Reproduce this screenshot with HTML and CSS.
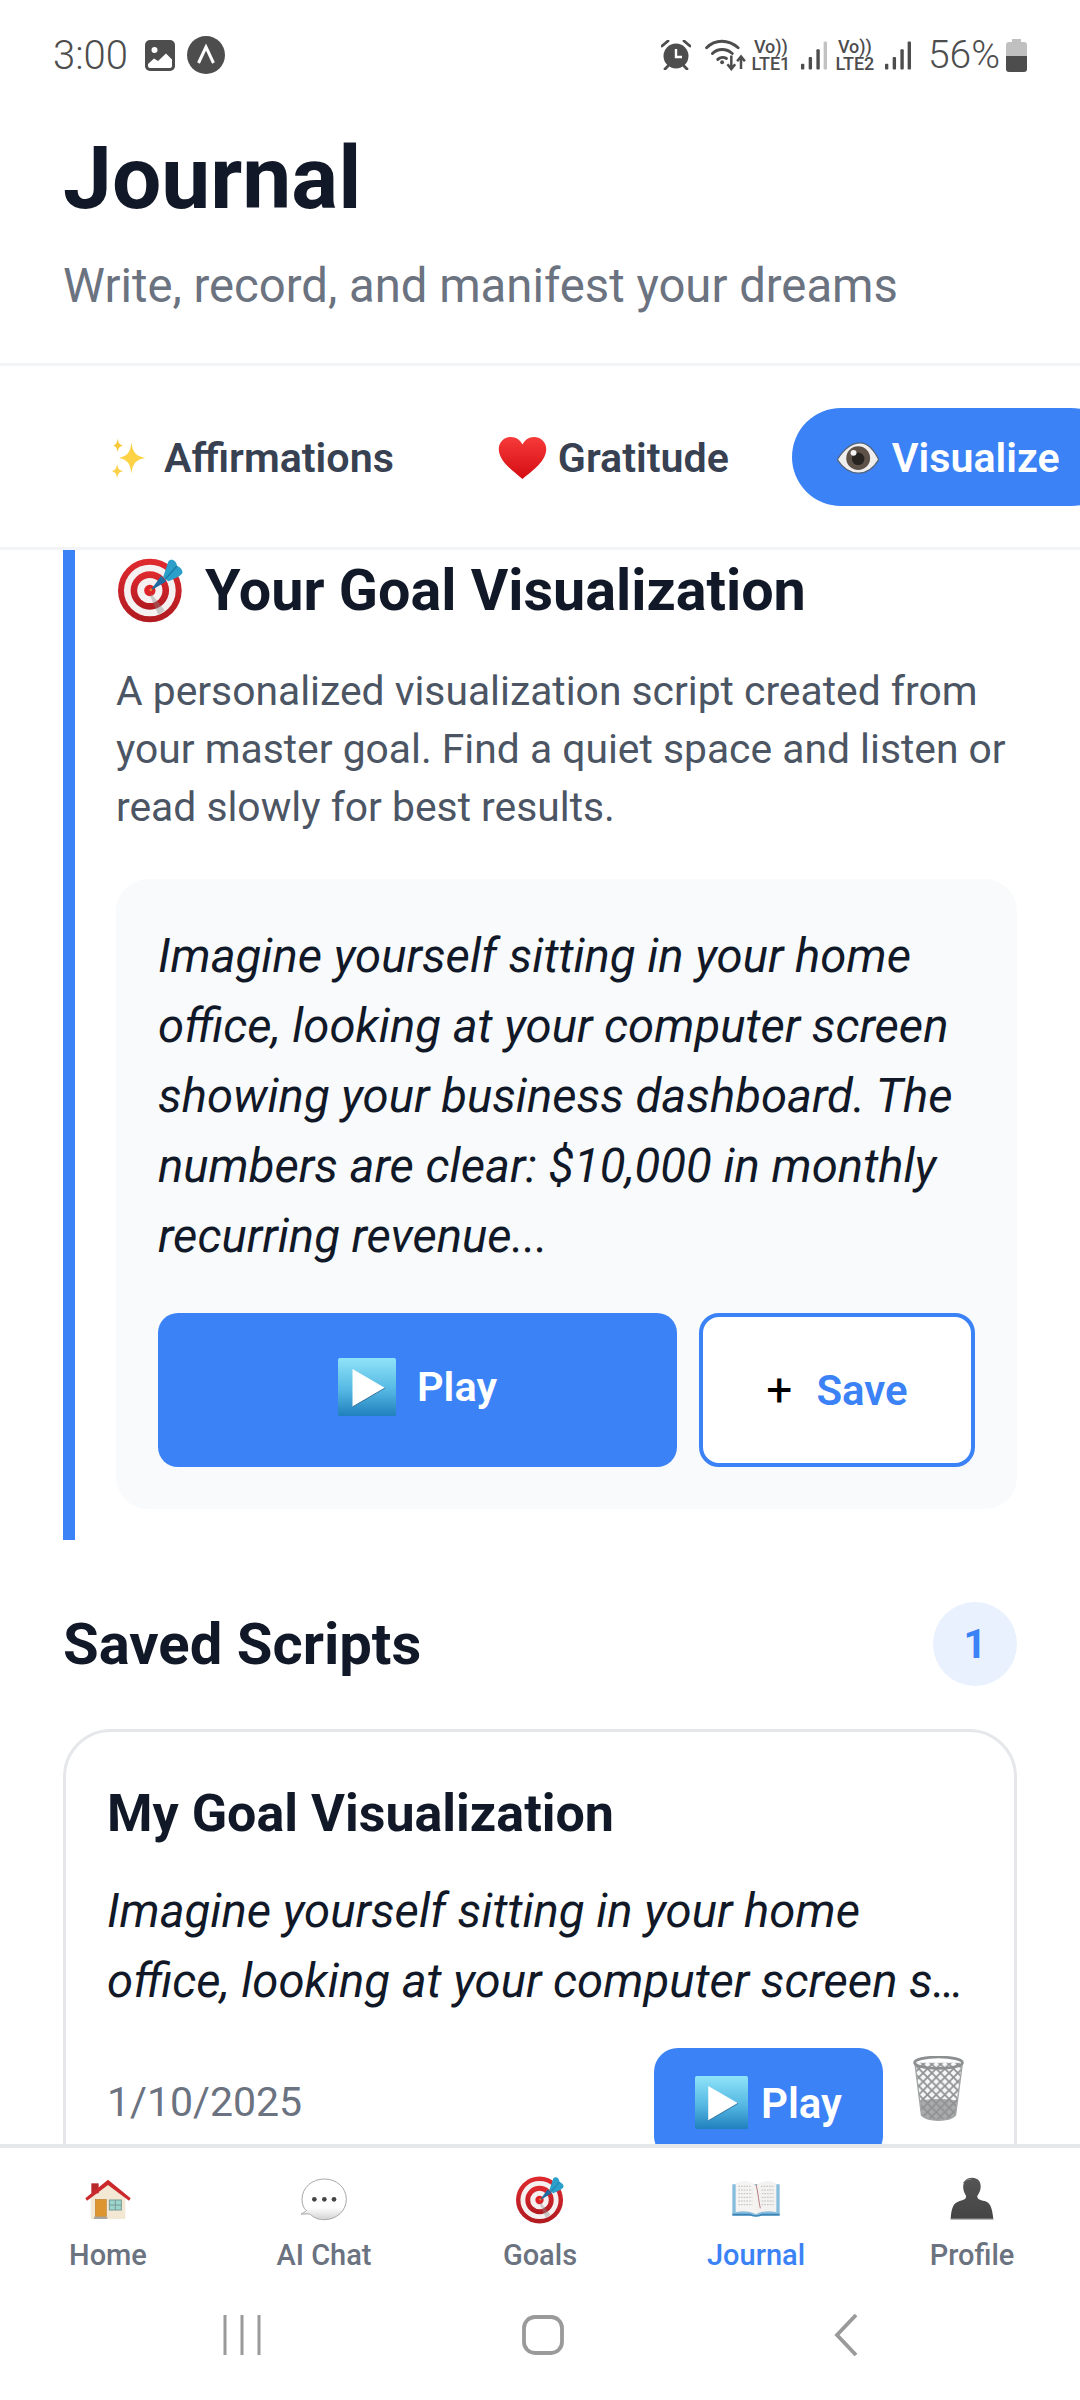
FILE: index.html
```html
<!DOCTYPE html>
<html lang="en">
<head>
<meta charset="utf-8">
<title>Journal</title>
<link rel="stylesheet" href="styles.css">
</head>
<body>
<svg class="defs" width="0" height="0" aria-hidden="true">
  <defs>
    <linearGradient id="playGrad" x1="0" y1="0" x2="0" y2="1">
      <stop offset="0" stop-color="#8fe3f8"/><stop offset=".55" stop-color="#55b8e3"/><stop offset="1" stop-color="#1f80bd"/>
    </linearGradient>
    <linearGradient id="heartGrad" x1="0" y1="0" x2="0" y2="1">
      <stop offset="0" stop-color="#f63a3a"/><stop offset="1" stop-color="#d40d12"/>
    </linearGradient>
    <linearGradient id="bustGrad" x1="0" y1="0" x2="0" y2="1">
      <stop offset="0" stop-color="#555"/><stop offset="1" stop-color="#444"/>
    </linearGradient>
    <linearGradient id="ringGrad" x1="0" y1="0" x2="0" y2="1">
      <stop offset="0" stop-color="#e02a2f"/><stop offset="1" stop-color="#b01a20"/>
    </linearGradient>
    <linearGradient id="chatGrad" x1="0" y1="0" x2="0" y2="1">
      <stop offset="0" stop-color="#fff"/><stop offset=".7" stop-color="#fff"/><stop offset="1" stop-color="#d2d2d2"/>
    </linearGradient>
    <pattern id="mesh" width="26" height="26" patternUnits="userSpaceOnUse">
      <path d="M0 0 26 26M26 0 0 26" stroke="#8f9293" stroke-width="5.500"/>
    </pattern>
    <symbol id="e-target" viewBox="54 20 196 196">
      <circle cx="150" cy="118" r="96" fill="url(#ringGrad)"/>
      <circle cx="150" cy="118" r="78" fill="#f6f1f1"/>
      <circle cx="150" cy="118" r="58" fill="url(#ringGrad)"/>
      <circle cx="150" cy="118" r="38" fill="#f6f1f1"/>
      <circle cx="150" cy="118" r="17" fill="#dd2228"/>
      <path d="M155 128 195 178 176 192 150 132Z" fill="#8a8a8a" opacity=".4"/>
      <path d="M150 120 184 74 200 90Z" fill="#1f6a9e"/>
      <path d="M190 78 206 30C216 20 230 28 232 44 244 48 250 58 248 66 238 78 220 84 206 90Z" fill="#2b9fca"/>
      <path d="M196 84 232 44" stroke="#1a7ba6" stroke-width="4"/>
      <circle cx="153" cy="116" r="4" fill="#e8862a"/>
    </symbol>
    <symbol id="e-spark" viewBox="0 0 64 64">
      <path d="M36 6C38 22 42 28 58 31 42 34 38 40 36 56 34 40 30 34 16 31 30 28 34 22 36 6Z" fill="#fdd247"/>
      <path d="M14 0C15 7 17 10 22 11 17 13 15 15 14 22 13 15 11 13 7 11 11 10 13 7 14 0Z" fill="#f9c93c"/>
      <path d="M13 40C14 48 16 51 23 52 16 54 14 56 13 64 12 56 10 54 4 52 10 51 12 48 13 40Z" fill="#fbd04a"/>
    </symbol>
    <symbol id="e-heart" viewBox="0 0 64 56" preserveAspectRatio="none">
      <path d="M32 56C18 44 1 32 1 16 1 6 9 0 17 0 24 0 29 4 32 10 35 4 40 0 47 0 55 0 63 6 63 16 63 32 46 44 32 56Z" fill="url(#heartGrad)"/>
    </symbol>
    <symbol id="e-eye" viewBox="40 40 127 95">
      <path d="M41 92C65 55 90 42 110 42 130 42 150 60 166 92 150 120 130 133 105 133 85 133 60 122 41 92Z" fill="#efeeed" stroke="#54647c" stroke-width="4"/>
      <circle cx="104" cy="88" r="36" fill="#5e5148"/>
      <circle cx="104" cy="90" r="19" fill="#262321"/>
      <circle cx="90" cy="72" r="9" fill="#f2f2f2"/>
    </symbol>
    <symbol id="e-play" viewBox="0 0 64 64">
      <rect width="64" height="64" rx="2" fill="url(#playGrad)"/>
      <path d="M16 12 52 33 16 54Z" fill="#fff"/>
      <path d="M52 33 16 54" stroke="#27668f" stroke-width="1"/>
    </symbol>
    <symbol id="e-trash" viewBox="880 105 152 195">
      <path d="M885 125 905 283C925 303 987 303 1007 283L1028 125Z" fill="#f7f7f7"/>
      <path d="M885 125 905 283C925 303 987 303 1007 283L1028 125Z" fill="url(#mesh)"/>
      <path d="M901 240C930 232 985 232 1012 240L1007 283C987 303 925 303 905 283Z" fill="#8f9293" opacity=".75"/>
      <path d="M885 125 905 283C925 303 987 303 1007 283L1028 125" fill="none" stroke="#a3a6a7" stroke-width="4"/>
      <ellipse cx="956" cy="125" rx="72" ry="17" fill="none" stroke="#8c8f90" stroke-width="8"/>
    </symbol>
    <symbol id="e-house" viewBox="38 33 144 144">
      <path d="M58 98 110 56 162 98V162H58Z" fill="#f2e8d3"/>
      <rect x="60" y="55" width="22" height="30" fill="#b9292c"/>
      <path d="M42 100 110 44 178 100 173 107 110 60 47 107Z" fill="#cb282c"/>
      <rect x="72" y="103" width="33" height="52" fill="#dd9530" stroke="#b4741f" stroke-width="1.500"/>
      <rect x="68" y="155" width="40" height="7" fill="#a9a6a0"/>
      <rect x="114" y="105" width="36" height="30" fill="#9ad6ce" stroke="#7b9a93" stroke-width="3"/>
      <path d="M132 105V135M114 120H150" stroke="#7b9a93" stroke-width="3"/>
    </symbol>
    <symbol id="e-chat" viewBox="689 33 144 144">
      <path d="M762 42C725 42 695 68 695 103 695 118 700 130 708 137 705 140 698 145 692 147 702 148 712 145 720 148 733 160 745 164 762 164 799 164 828 137 828 103 828 68 799 42 762 42Z" fill="url(#chatGrad)" stroke="#a8a8a8" stroke-width="3"/>
      <circle cx="732" cy="103" r="7" fill="#444"/><circle cx="762" cy="103" r="7" fill="#444"/><circle cx="791" cy="103" r="7" fill="#444"/>
    </symbol>
    <symbol id="e-book" viewBox="63 33 144 144">
      <path d="M64 58H206V150H152Q135 158 118 150H64Z" fill="#86bcdc"/>
      <path d="M64 146H118Q135 156 152 146H206V152H152Q135 158 118 152H64Z" fill="#3a85b8"/>
      <path d="M74 56C95 42 120 48 135 62V148C118 138 92 136 74 142Z" fill="#f5f4f2"/>
      <path d="M196 56C175 42 150 48 135 62V148C152 138 178 136 196 142Z" fill="#f3f2f0"/>
      <path d="M135 58C142 85 143 110 148 130" fill="none" stroke="#b87e7e" stroke-width="3"/>
      <path d="M82 64H122M82 75H124M82 86H124M82 97H124M82 108H124M82 119H124M150 64H188M152 75H188M152 86H188M152 97H188M152 108H188M152 119H188" stroke="#b5b5b5" stroke-width="2.500" stroke-dasharray="5 3"/>
    </symbol>
    <symbol id="e-bust" viewBox="710 33 144 144">
      <path d="M718 163C720 128 726 114 745 108 760 104 766 100 764 92 756 80 752 62 760 48 770 36 795 34 805 50 812 65 806 82 798 92 797 102 805 105 820 108 836 112 843 128 846 163Z" fill="url(#bustGrad)"/>
      <path d="M718 162H846" stroke="#9d9d9d" stroke-width="3"/>
      <path d="M756 54C762 44 772 42 780 44" fill="none" stroke="#8a8a8a" stroke-width="3"/>
    </symbol>
  </defs>
</svg>

<div class="app">
  <div class="status">
    <div class="status-left">
      <span class="time">3:00</span>
      <svg class="ic-img" viewBox="0 0 30 31"><rect width="30" height="31" rx="5" fill="#4d4d4d"/><circle cx="9.500" cy="10" r="3" fill="#fff"/><path d="M3 24 9 18.500 13 21 21 13.500 27 19.500V26C27 27 26 28 25 28H5C4 28 3 27 3 26Z" fill="#fff"/></svg>
      <svg class="ic-a" viewBox="0 0 38 38"><circle cx="19" cy="19" r="19" fill="#4d4d4d"/><path d="M11.500 27 19 11 26.500 27" fill="none" stroke="#fff" stroke-width="3"/></svg>
    </div>
    <div class="status-right">
      <svg class="ic-alarm" viewBox="0 0 30 30"><circle cx="15" cy="16" r="12.500" fill="#4d4d4d"/><path d="M15 9V17H21" fill="none" stroke="#fff" stroke-width="2.400"/><path d="M1 6 7 1M29 6 23 1M4 29 7 26M26 29 23 26" stroke="#4d4d4d" stroke-width="2.800" stroke-linecap="round"/></svg>
      <svg class="ic-wifi" viewBox="0 0 42 33"><g fill="none" stroke="#4d4d4d" stroke-width="3" stroke-linecap="round"><path d="M1.500 9C10 0 24 0 34 9"/><path d="M7.500 15C13 9.500 22 9.500 28 15"/><path d="M13 21C15.500 18.500 19.500 18.500 22 20"/></g><circle cx="17.500" cy="24" r="2" fill="#4d4d4d"/><path d="M27 17V30M23 26 27 31 31 26M37 31V19M33 23 37 18 41 23" fill="none" stroke="#4d4d4d" stroke-width="2.600"/></svg>
      <span class="volte"><span>Vo))</span><span>LTE1</span></span>
      <svg class="ic-sig" viewBox="0 0 28 30"><g fill="#4d4d4d"><rect x="1" y="24" width="3.500" height="6" rx="1"/><rect x="9" y="17" width="3.500" height="13" rx="1"/><rect x="17" y="9" width="3.500" height="21" rx="1"/></g><rect x="24.500" y="1" width="3.500" height="29" rx="1" fill="#c2c2c2"/></svg>
      <span class="volte volte-2"><span>Vo))</span><span>LTE2</span></span>
      <svg class="ic-sig" viewBox="0 0 28 30"><g fill="#4d4d4d"><rect x="1" y="24" width="3.500" height="6" rx="1"/><rect x="9" y="17" width="3.500" height="13" rx="1"/><rect x="17" y="9" width="3.500" height="21" rx="1"/><rect x="24.500" y="1" width="3.500" height="29" rx="1"/></g></svg>
      <span class="pct">56%</span>
      <svg class="ic-bat" viewBox="0 0 21 33"><path d="M6 0H15V3H18C20 3 21 4 21 6V17H0V6C0 4 1 3 3 3H6Z" fill="#c0c0c0"/><path d="M0 17H21V30C21 32 20 33 18 33H3C1 33 0 32 0 30Z" fill="#4d4d4d"/></svg>
    </div>
  </div>

  <header class="header">
    <h1 class="title">Journal</h1>
    <p class="subtitle">Write, record, and manifest your dreams</p>
  </header>

  <nav class="tabs">
    <div class="tab"><svg class="emoji e-spark"><use href="#e-spark"/></svg>Affirmations</div>
    <div class="tab"><svg class="emoji e-heart"><use href="#e-heart"/></svg>Gratitude</div>
    <div class="tab tab-active"><svg class="emoji e-eye"><use href="#e-eye"/></svg>Visualize</div>
  </nav>

  <main class="scroll">
    <section class="goal-card">
      <h2 class="goal-title"><svg class="emoji e-goal"><use href="#e-target"/></svg>Your Goal Visualization</h2>
      <p class="goal-desc">A personalized visualization script created from your master goal. Find a quiet space and listen or read slowly for best results.</p>
      <div class="script-box">
        <p class="script-text">Imagine yourself sitting in your home office, looking at your computer screen showing your business dashboard. The numbers are clear: $10,000 in monthly recurring revenue...</p>
        <div class="actions">
          <button class="btn btn-play"><svg class="emoji e-play-lg"><use href="#e-play"/></svg>Play</button>
          <button class="btn btn-save"><span class="plus">+</span>Save</button>
        </div>
      </div>
    </section>

    <div class="saved-head">
      <h2 class="saved-title">Saved Scripts</h2>
      <span class="badge">1</span>
    </div>

    <article class="saved-card">
      <h3 class="saved-name">My Goal Visualization</h3>
      <p class="saved-text"><span class="saved-line">Imagine yourself sitting in your home</span><span class="saved-line">office, looking at your computer screen showing your business dashboard.</span></p>
      <div class="saved-foot">
        <span class="date">1/10/2025</span>
        <div class="saved-actions">
          <button class="btn btn-play-sm"><svg class="emoji e-play-sm"><use href="#e-play"/></svg>Play</button>
          <svg class="emoji e-trash"><use href="#e-trash"/></svg>
        </div>
      </div>
    </article>
  </main>

  <nav class="bottom">
    <div class="nav-item"><svg class="nav-ic"><use href="#e-house"/></svg><span>Home</span></div>
    <div class="nav-item"><svg class="nav-ic"><use href="#e-chat"/></svg><span>AI Chat</span></div>
    <div class="nav-item"><svg class="nav-ic"><use href="#e-target"/></svg><span>Goals</span></div>
    <div class="nav-item nav-active"><svg class="nav-ic"><use href="#e-book"/></svg><span>Journal</span></div>
    <div class="nav-item"><svg class="nav-ic"><use href="#e-bust"/></svg><span>Profile</span></div>
  </nav>

  <div class="sysnav">
    <svg class="sys-recent" viewBox="0 0 38 40"><path d="M2 0V40M19 0V40M36 0V40" stroke="#9a9a9a" stroke-width="3" fill="none"/></svg>
    <svg class="sys-home" viewBox="0 0 42 40"><rect x="2" y="2" width="38" height="36" rx="11" fill="none" stroke="#9a9a9a" stroke-width="3.800"/></svg>
    <svg class="sys-back" viewBox="0 0 24 42"><path d="M22 1 3 21 22 41" fill="none" stroke="#9a9a9a" stroke-width="3.800"/></svg>
  </div>
</div>
</body>
</html>
```
FILE: styles.css
```css
* { box-sizing: border-box; }
html, body { margin: 0; padding: 0; }
body { background: #fff; font-family: Roboto, "Noto Sans", sans-serif; color: #111827; }
p, h1, h2, h3 { margin: 0; }
.defs { position: absolute; }
.app { width: 1080px; height: 2400px; display: flex; flex-direction: column; overflow: hidden; background: #fff; }

/* status bar */
.status { height: 110px; flex: none; display: flex; justify-content: space-between; align-items: center; padding: 0 53px 0 53px; color: #4d4d4d; }
.status-left, .status-right { display: flex; align-items: center; }
.time { font-size: 40px; font-weight: 300; margin-right: 17px; }
.ic-img { width: 30px; height: 31px; margin-right: 12px; }
.ic-a { width: 38px; height: 38px; }
.ic-alarm { width: 30px; height: 30px; margin-right: 14px; }
.ic-wifi { width: 41px; height: 32px; }
.volte { display: flex; flex-direction: column; align-items: center; width: 40px; margin: 0 9px 0 5px; font-size: 18px; font-weight: 500; line-height: 17px; white-space: nowrap; }
.volte-2 { margin-left: 8px; margin-right: 9px; }
.ic-sig { width: 27px; height: 30px; }
.pct { font-size: 39px; font-weight: 300; margin-left: 17px; margin-right: 6px; }
.ic-bat { width: 21px; height: 33px; }

/* header */
.header { flex: none; height: 256px; padding: 20px 63px 0; border-bottom: 3px solid #f3f4f6; }
.title { font-size: 87.5px; line-height: 96px; font-weight: 700; color: #111827; }
.subtitle { font-size: 47.25px; line-height: 56px; color: #6b7280; margin-top: 32px; }

/* tabs */
.tabs { flex: none; height: 184px; display: flex; align-items: center; gap: 22px; padding-left: 68px; border-bottom: 3px solid #f3f4f6; overflow: hidden; }
.tab { flex: none; height: 98px; display: flex; align-items: center; padding: 3px 41px 0; font-size: 41.2px; font-weight: 600; color: #374151; border-radius: 49px; white-space: nowrap; }
.tab-active { background: #3b82f6; color: #fff; padding: 3px 60px 0 45px; }
.emoji { flex: none; display: block; }
.e-spark { width: 40px; height: 41px; margin-right: 15px; }
.e-heart { width: 49px; height: 42px; margin-right: 11px; }
.e-eye { width: 42px; height: 32px; margin-right: 13px; }

/* scrolling body */
.scroll { flex: 1; min-height: 0; overflow: hidden; padding: 0 63px; }
.goal-card { border-left: 12px solid #3b82f6; padding: 8px 0 31px 41px; }
.goal-title { display: flex; align-items: center; font-size: 57.5px; line-height: 64px; font-weight: 700; color: #111827; }
.e-goal { width: 65px; height: 65px; margin: 0 22px 0 2px; }
.goal-desc { font-size: 40.8px; line-height: 58px; color: #4b5563; margin-top: 39px; }
.script-box { background: #f8fafc; border-radius: 32px; padding: 42px; margin-top: 43px; }
.script-text { font-size: 47.25px; line-height: 70px; font-style: italic; color: #111827; }
.actions { display: flex; gap: 22px; margin-top: 42px; }
.btn { border: 0; font-family: inherit; display: flex; align-items: center; justify-content: center; }
.btn-play { flex: 1; height: 154px; background: #3b82f6; border-radius: 20px; color: #fff; font-size: 41.5px; font-weight: 600; padding-bottom: 8px; }
.e-play-lg { width: 58px; height: 58px; margin-right: 21px; }
.btn-save { flex: none; width: 276px; height: 154px; background: #fff; border: 4px solid #3b82f6; border-radius: 20px; color: #3b82f6; font-size: 42px; font-weight: 600; }
.plus { color: #000; margin-right: 24px; font-size: 46px; font-weight: 400; }

.saved-head { display: flex; justify-content: space-between; align-items: center; margin-top: 62px; height: 84px; }
.saved-title { font-size: 58px; font-weight: 700; color: #111827; }
.badge { width: 84px; height: 84px; border-radius: 50%; background: #e9f1fe; color: #3b82f6; font-size: 40px; font-weight: 700; display: flex; align-items: center; justify-content: center; }

.saved-card { margin-top: 43px; border: 3px solid #e5e7eb; border-radius: 48px; padding: 52px 41px 60px; height: 500px; }
.saved-name { font-size: 52px; line-height: 60px; font-weight: 700; color: #111827; }
.saved-text { font-size: 47.25px; line-height: 70px; font-style: italic; color: #111827; margin-top: 32px; }
.saved-line { display: block; white-space: nowrap; overflow: hidden; text-overflow: ellipsis; }
.saved-foot { display: flex; justify-content: space-between; align-items: flex-start; margin-top: 32px; }
.date { font-size: 41px; line-height: 48px; color: #6b7280; margin-top: 30px; }
.saved-actions { display: flex; align-items: flex-start; gap: 30px; margin-right: 9px; }
.btn-play-sm { width: 229px; height: 112px; background: #3b82f6; border-radius: 24px; color: #fff; font-size: 42px; font-weight: 600; padding-top: 0; }
.e-play-sm { width: 53px; height: 53px; margin-right: 13px; margin-top: -2px; }
.e-trash { width: 51px; height: 65px; margin-top: 8px; }

/* bottom nav */
.bottom { flex: none; height: 156px; display: grid; grid-template-columns: repeat(5, 1fr); border-top: 4px solid #e5e7eb; background: #fff; padding-top: 28px; }
.nav-item { display: flex; flex-direction: column; align-items: center; font-size: 29px; line-height: 34px; font-weight: 500; color: #6b7280; }
.nav-ic { width: 48px; height: 48px; margin-bottom: 14px; }
.nav-active { color: #3b82f6; }

/* system nav */
.sysnav { flex: none; height: 100px; display: flex; align-items: center; justify-content: center; padding-bottom: 30px; }
.sys-recent { width: 38px; height: 40px; margin-right: 261px; }
.sys-home { width: 42px; height: 40px; margin-right: 270px; }
.sys-back { width: 24px; height: 42px; }
```
